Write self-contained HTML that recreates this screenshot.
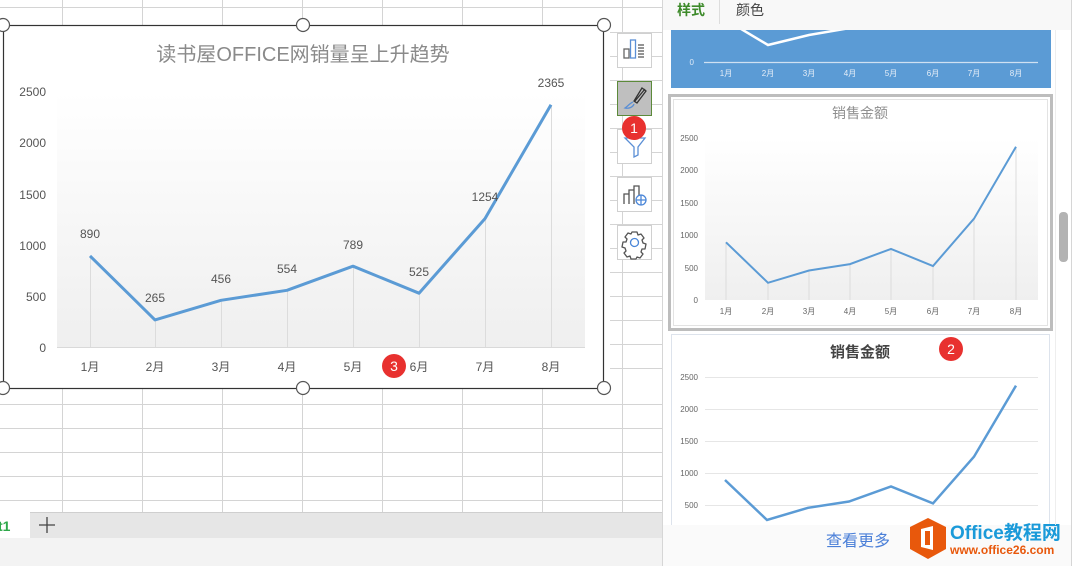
<!DOCTYPE html>
<html><head><meta charset="utf-8"><style>
html,body{margin:0;padding:0;width:1072px;height:566px;overflow:hidden;background:#fff;font-family:"Liberation Sans","Noto Sans CJK SC",sans-serif;}
</style></head><body>
<svg width="1072" height="566" viewBox="0 0 1072 566" xmlns="http://www.w3.org/2000/svg" font-family="Liberation Sans, Noto Sans CJK SC, sans-serif">
<defs>
<linearGradient id="g1" x1="0" y1="0" x2="0" y2="1"><stop offset="0" stop-color="#fff"/><stop offset="1" stop-color="#efefef"/></linearGradient>
<clipPath id="c3"><rect x="671" y="334" width="380" height="191"/></clipPath>
<clipPath id="c1"><rect x="671" y="30" width="380" height="58"/></clipPath>
</defs>
<g stroke="#d4d4d4" stroke-width="1">
<line x1="0" y1="404.5" x2="662" y2="404.5"/><line x1="0" y1="428.5" x2="662" y2="428.5"/><line x1="0" y1="452.5" x2="662" y2="452.5"/><line x1="0" y1="476.5" x2="662" y2="476.5"/><line x1="0" y1="500.5" x2="662" y2="500.5"/>
<line x1="0" y1="7.5" x2="662" y2="7.5"/>
<line x1="62.5" y1="0" x2="62.5" y2="512"/><line x1="142.5" y1="0" x2="142.5" y2="512"/><line x1="222.5" y1="0" x2="222.5" y2="512"/><line x1="302.5" y1="0" x2="302.5" y2="512"/><line x1="382.5" y1="0" x2="382.5" y2="512"/><line x1="462.5" y1="0" x2="462.5" y2="512"/><line x1="542.5" y1="0" x2="542.5" y2="512"/><line x1="622.5" y1="0" x2="622.5" y2="512"/>
<line x1="610" y1="56.5" x2="662" y2="56.5"/><line x1="610" y1="80.5" x2="662" y2="80.5"/><line x1="610" y1="104.5" x2="662" y2="104.5"/><line x1="610" y1="128.5" x2="662" y2="128.5"/><line x1="610" y1="152.5" x2="662" y2="152.5"/><line x1="610" y1="176.5" x2="662" y2="176.5"/><line x1="610" y1="200.5" x2="662" y2="200.5"/><line x1="610" y1="224.5" x2="662" y2="224.5"/><line x1="610" y1="248.5" x2="662" y2="248.5"/><line x1="610" y1="272.5" x2="662" y2="272.5"/><line x1="610" y1="296.5" x2="662" y2="296.5"/><line x1="610" y1="320.5" x2="662" y2="320.5"/><line x1="610" y1="344.5" x2="662" y2="344.5"/><line x1="610" y1="368.5" x2="662" y2="368.5"/><line x1="610" y1="32.5" x2="662" y2="32.5"/>
</g>
<rect x="0" y="512" width="662" height="26" fill="#e6e6e6"/>
<line x1="0" y1="512.5" x2="662" y2="512.5" stroke="#cfcfcf"/>
<rect x="0" y="512" width="30" height="26" fill="#fff"/>
<text x="-2" y="531" font-size="14" font-weight="bold" fill="#2ea84a">t1</text>
<path d="M47 517v16M39 525h16" stroke="#444" stroke-width="1.3"/>
<rect x="0" y="538" width="662" height="28" fill="#f3f3f3"/>
<rect x="3.5" y="25.5" width="600" height="363" fill="#fff" stroke="#333" stroke-width="1.2"/>
<rect x="57" y="92" width="528" height="255" fill="url(#g1)"/>
<text x="303" y="61" font-size="20" fill="#8a8a8a" text-anchor="middle">读书屋OFFICE网销量呈上升趋势</text>
<g font-size="12" fill="#555" text-anchor="end">
<text x="46" y="96">2500</text><text x="46" y="147">2000</text><text x="46" y="199">1500</text><text x="46" y="250">1000</text><text x="46" y="301">500</text><text x="46" y="352">0</text>
</g>
<g stroke="#dcdcdc"><line x1="90.5" y1="256" x2="90.5" y2="347"/><line x1="155.5" y1="320" x2="155.5" y2="347"/><line x1="221.5" y1="300" x2="221.5" y2="347"/><line x1="287.5" y1="290" x2="287.5" y2="347"/><line x1="353.5" y1="266" x2="353.5" y2="347"/><line x1="419.5" y1="293" x2="419.5" y2="347"/><line x1="485.5" y1="218" x2="485.5" y2="347"/><line x1="551.5" y1="105" x2="551.5" y2="347"/></g>
<line x1="57" y1="347.5" x2="585" y2="347.5" stroke="#d9d9d9"/>
<polyline points="90,255.9 155,319.9 221,300.3 287,290.3 353,266.2 419,293.2 485,218.6 551,104.8" fill="none" stroke="#5b9bd5" stroke-width="3" stroke-linejoin="round"/>
<g font-size="12" fill="#555" text-anchor="middle">
<text x="90" y="238">890</text><text x="155" y="302">265</text><text x="221" y="283">456</text><text x="287" y="273">554</text><text x="353" y="249">789</text><text x="419" y="276">525</text><text x="485" y="201">1254</text><text x="551" y="87">2365</text>
<text x="90" y="371">1月</text><text x="155" y="371">2月</text><text x="221" y="371">3月</text><text x="287" y="371">4月</text><text x="353" y="371">5月</text><text x="419" y="371">6月</text><text x="485" y="371">7月</text><text x="551" y="371">8月</text>
</g>
<g fill="#fff" stroke="#555" stroke-width="1.2">
<circle cx="3" cy="25" r="6.5"/><circle cx="303" cy="25" r="6.5"/><circle cx="604" cy="25" r="6.5"/>
<circle cx="3" cy="388" r="6.5"/><circle cx="303" cy="388" r="6.5"/><circle cx="604" cy="388" r="6.5"/>
</g>
<circle cx="394" cy="366" r="12" fill="#e8312f"/><text x="394" y="371" font-size="14" fill="#fff" text-anchor="middle">3</text>
<g fill="#fff" stroke="#d0d0d0"><rect x="617.5" y="33.5" width="34" height="34"/><rect x="617.5" y="129.5" width="34" height="34"/><rect x="617.5" y="177.5" width="34" height="34"/><rect x="617.5" y="225.5" width="34" height="34"/></g>
<rect x="617.5" y="81.5" width="34" height="34" fill="#bfbfbf" stroke="#5c8a3a"/>
<g fill="none" stroke-width="1.3">
<rect x="624" y="49" width="5" height="9" stroke="#666"/><rect x="630.5" y="40" width="5" height="18" stroke="#5b8fd5"/>
<path d="M638 45h6M638 48h6M638 51h6M638 54h6M638 57h6" stroke="#555"/>
<path d="M645 89l-10 12M642 88l4 3-9 12-3-2z" stroke="#333"/><path d="M633 102c-3 1-5 4-8 6 4 1 8-1 9-4" stroke="#5b8fd5"/>
<path d="M625 138h20l-7 9v8l-4 2v-10z" stroke="#5b8fd5"/>
<path d="M624 204v-10h5v10M629 204v-14h5v14M634 204v-18h5v18" stroke="#555"/><circle cx="641" cy="200" r="5" stroke="#4a86d8" fill="#fff"/><path d="M636 200h10M641 195v10" stroke="#4a86d8"/>
<circle cx="634.5" cy="242.5" r="4" stroke="#4a86d8"/>
<path d="M632 232h5l1 3 3-1 3 4-2 2 1 3 3 1v0l-1 5-3 0-1 3 2 2-3 4-3-1-1 2h-5l-1-3-3 1-3-4 2-2-1-3-3-1 1-5h3l1-3-2-2 3-4 3 1z" stroke="#555" stroke-linejoin="round"/>
</g>
<circle cx="634" cy="128" r="12" fill="#e8312f"/><text x="634" y="133" font-size="14" fill="#fff" text-anchor="middle">1</text>
<rect x="662" y="0" width="410" height="566" fill="#fff"/>
<line x1="662.5" y1="0" x2="662.5" y2="566" stroke="#d6d6d6"/>
<line x1="1071.5" y1="0" x2="1071.5" y2="566" stroke="#d6d6d6"/>
<rect x="663" y="0" width="408" height="30" fill="#f8f8f8"/>
<text x="677" y="15" font-size="14" font-weight="bold" fill="#3d8a2a">样式</text>
<line x1="719.5" y1="0" x2="719.5" y2="24" stroke="#ddd"/>
<text x="736" y="15" font-size="14" fill="#444">颜色</text>
<rect x="671" y="30" width="380" height="58" fill="#5b9bd5"/>
<g clip-path="url(#c1)"><polyline points="726,20 768,45 809,35 850,28" fill="none" stroke="#fff" stroke-width="2.5"/></g>
<line x1="704" y1="62.5" x2="1038" y2="62.5" stroke="#cfe0f2" stroke-width="1.2"/>
<text x="694" y="65" font-size="8" fill="#dfeaf7" text-anchor="end">0</text>
<g font-size="8" fill="#e6eef8" text-anchor="middle"><text x="726" y="76">1月</text><text x="768" y="76">2月</text><text x="809" y="76">3月</text><text x="850" y="76">4月</text><text x="891" y="76">5月</text><text x="933" y="76">6月</text><text x="974" y="76">7月</text><text x="1016" y="76">8月</text></g>
<rect x="669.5" y="95.5" width="382" height="234" fill="#fff" stroke="#bdbdbd" stroke-width="3"/>
<rect x="673.5" y="99.5" width="374" height="226" fill="none" stroke="#e3e3e3"/>
<text x="860" y="118" font-size="14" fill="#8f8f8f" text-anchor="middle">销售金额</text>
<rect x="705" y="138" width="333" height="162" fill="url(#g1)"/>
<g stroke="#dcdcdc"><line x1="726" y1="242" x2="726" y2="300"/><line x1="768" y1="283" x2="768" y2="300"/><line x1="809" y1="270" x2="809" y2="300"/><line x1="850" y1="264" x2="850" y2="300"/><line x1="891" y1="249" x2="891" y2="300"/><line x1="933" y1="266" x2="933" y2="300"/><line x1="974" y1="219" x2="974" y2="300"/><line x1="1016" y1="147" x2="1016" y2="300"/></g>
<polyline points="726,242.3 768,282.8 809,270.5 850,264.1 891,248.9 933,266 974,218.7 1016,146.7" fill="none" stroke="#5b9bd5" stroke-width="2"/>
<g font-size="8" fill="#666" text-anchor="end"><text x="698" y="141">2500</text><text x="698" y="173">2000</text><text x="698" y="206">1500</text><text x="698" y="238">1000</text><text x="698" y="271">500</text><text x="698" y="303">0</text></g>
<g font-size="8" fill="#666" text-anchor="middle"><text x="726" y="314">1月</text><text x="768" y="314">2月</text><text x="809" y="314">3月</text><text x="850" y="314">4月</text><text x="891" y="314">5月</text><text x="933" y="314">6月</text><text x="974" y="314">7月</text><text x="1016" y="314">8月</text></g>
<rect x="671.5" y="334.5" width="378" height="200" fill="#fff" stroke="#dde3ec"/>
<text x="860" y="357" font-size="15" font-weight="bold" fill="#444" text-anchor="middle">销售金额</text>
<g stroke="#e6e6e6"><line x1="705" y1="377.5" x2="1038" y2="377.5"/><line x1="705" y1="409.5" x2="1038" y2="409.5"/><line x1="705" y1="441.5" x2="1038" y2="441.5"/><line x1="705" y1="473.5" x2="1038" y2="473.5"/><line x1="705" y1="505.5" x2="1038" y2="505.5"/></g>
<g font-size="8" fill="#666" text-anchor="end"><text x="698" y="380">2500</text><text x="698" y="412">2000</text><text x="698" y="444">1500</text><text x="698" y="476">1000</text><text x="698" y="508">500</text></g>
<g clip-path="url(#c3)"><polyline points="725,480 767,520 808,507.8 849,501.5 891,486.5 933,503.4 974,456.7 1016,385.6" fill="none" stroke="#5b9bd5" stroke-width="2.5"/></g>
<circle cx="951" cy="349" r="12" fill="#e8312f"/><text x="951" y="354" font-size="14" fill="#fff" text-anchor="middle">2</text>
<rect x="663" y="525" width="408" height="41" fill="#fafafa"/>
<text x="826" y="546" font-size="16" fill="#4a7fd8">查看更多</text>
<polygon points="928,518 946,527 946,549 928,559 910,549 910,527" fill="#e8580c"/>
<path d="M921 529l12-3v24l-12-3z" fill="#fff"/><rect x="925" y="531" width="5" height="14" fill="#e8580c"/>
<text x="950" y="539" font-size="19" font-weight="bold" fill="#1a9ad9">Office教程网</text>
<text x="950" y="554" font-size="12" font-weight="bold" fill="#e8580c">www.office26.com</text>
<rect x="1059" y="212" width="9" height="50" rx="4" fill="#b3b3b3"/>
<line x1="1055.5" y1="30" x2="1055.5" y2="525" stroke="#eee"/>
</svg>
</body></html>
